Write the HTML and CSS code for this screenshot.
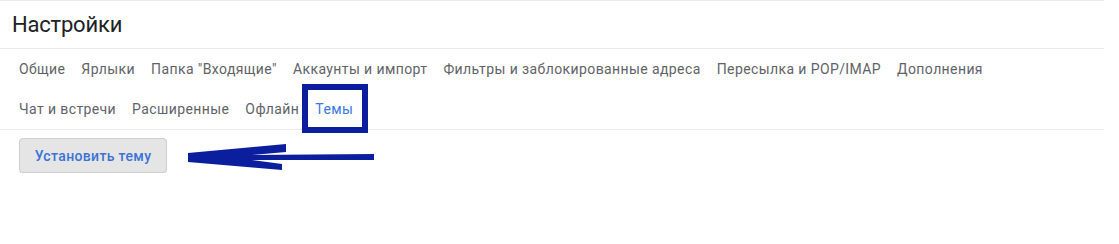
FILE: index.html
```html
<!DOCTYPE html>
<html lang="ru">
<head>
<meta charset="utf-8">
<title>Настройки</title>
<link rel="stylesheet" href="styles.css">
</head>
<body>
<div class="page">
  <header class="header">
    <h1 class="title">Настройки</h1>
  </header>
  <nav class="tabs">
    <div class="tab-list">
      <span class="tab">Общие</span>
      <span class="tab">Ярлыки</span>
      <span class="tab">Папка "Входящие"</span>
      <span class="tab">Аккаунты и импорт</span>
      <span class="tab">Фильтры и заблокированные адреса</span>
      <span class="tab">Пересылка и POP/IMAP</span>
      <span class="tab">Дополнения</span>
      <span class="tab">Чат и встречи</span>
      <span class="tab">Расширенные</span>
      <span class="tab">Офлайн</span>
      <span class="tab tab-active">Темы<span class="highlight"></span></span>
    </div>
  </nav>
  <div class="actions">
    <button class="btn" type="button">Установить тему</button>
    <svg class="arrow" width="190" height="30" viewBox="186 140 190 30" aria-hidden="true">
      <polygon fill="#0b1e9e" points="188,151 286,142 286,150 252,153 374,152 374,158 252,158 282,162 282,168 188,160"/>
    </svg>
  </div>
</div>
</body>
</html>
```

FILE: styles.css
```css
html, body {
  margin: 0;
  padding: 0;
  background: #ffffff;
}

.page {
  width: 1104px;
  border-top: 1px solid #ececec;
  font-family: Roboto, "Noto Sans", Arial, sans-serif;
}

.header {
  height: 47px;
  border-bottom: 1px solid #ebebeb;
  display: flex;
  align-items: center;
}

.title {
  margin: 0 0 0 12px;
  font-size: 22px;
  font-weight: 400;
  letter-spacing: -0.2px;
  color: #202124;
  line-height: 30px;
}

.tabs {
  border-bottom: 1px solid #ebebeb;
}

.tab-list {
  display: flex;
  flex-wrap: wrap;
  column-gap: 16px;
  width: 1000px;
  padding-left: 19px;
}

.tab {
  font-size: 14px;
  line-height: 40px;
  color: #5f6368;
  letter-spacing: 0.4px;
  white-space: nowrap;
  position: relative;
}

.tab-active {
  color: #3b78e2;
}

.highlight {
  position: absolute;
  left: -13px;
  right: -15px;
  top: -5px;
  bottom: -4px;
  border: 6px solid #0b1e9e;
}

.actions {
  display: flex;
  align-items: center;
  padding: 8px 0 0 19px;
  gap: 19px;
}

.btn {
  width: 148px;
  height: 35px;
  background: #e5e5e5;
  border: 1px solid #cfcfcf;
  border-radius: 4px;
  color: #3a72d6;
  font-family: Roboto, "Noto Sans", Arial, sans-serif;
  font-size: 14px;
  font-weight: 500;
  letter-spacing: 0.35px;
  padding: 0;
  box-shadow: 0 1px 1px rgba(0,0,0,0.08);
}

.arrow {
  display: block;
  margin-top: 2px;
}
```
